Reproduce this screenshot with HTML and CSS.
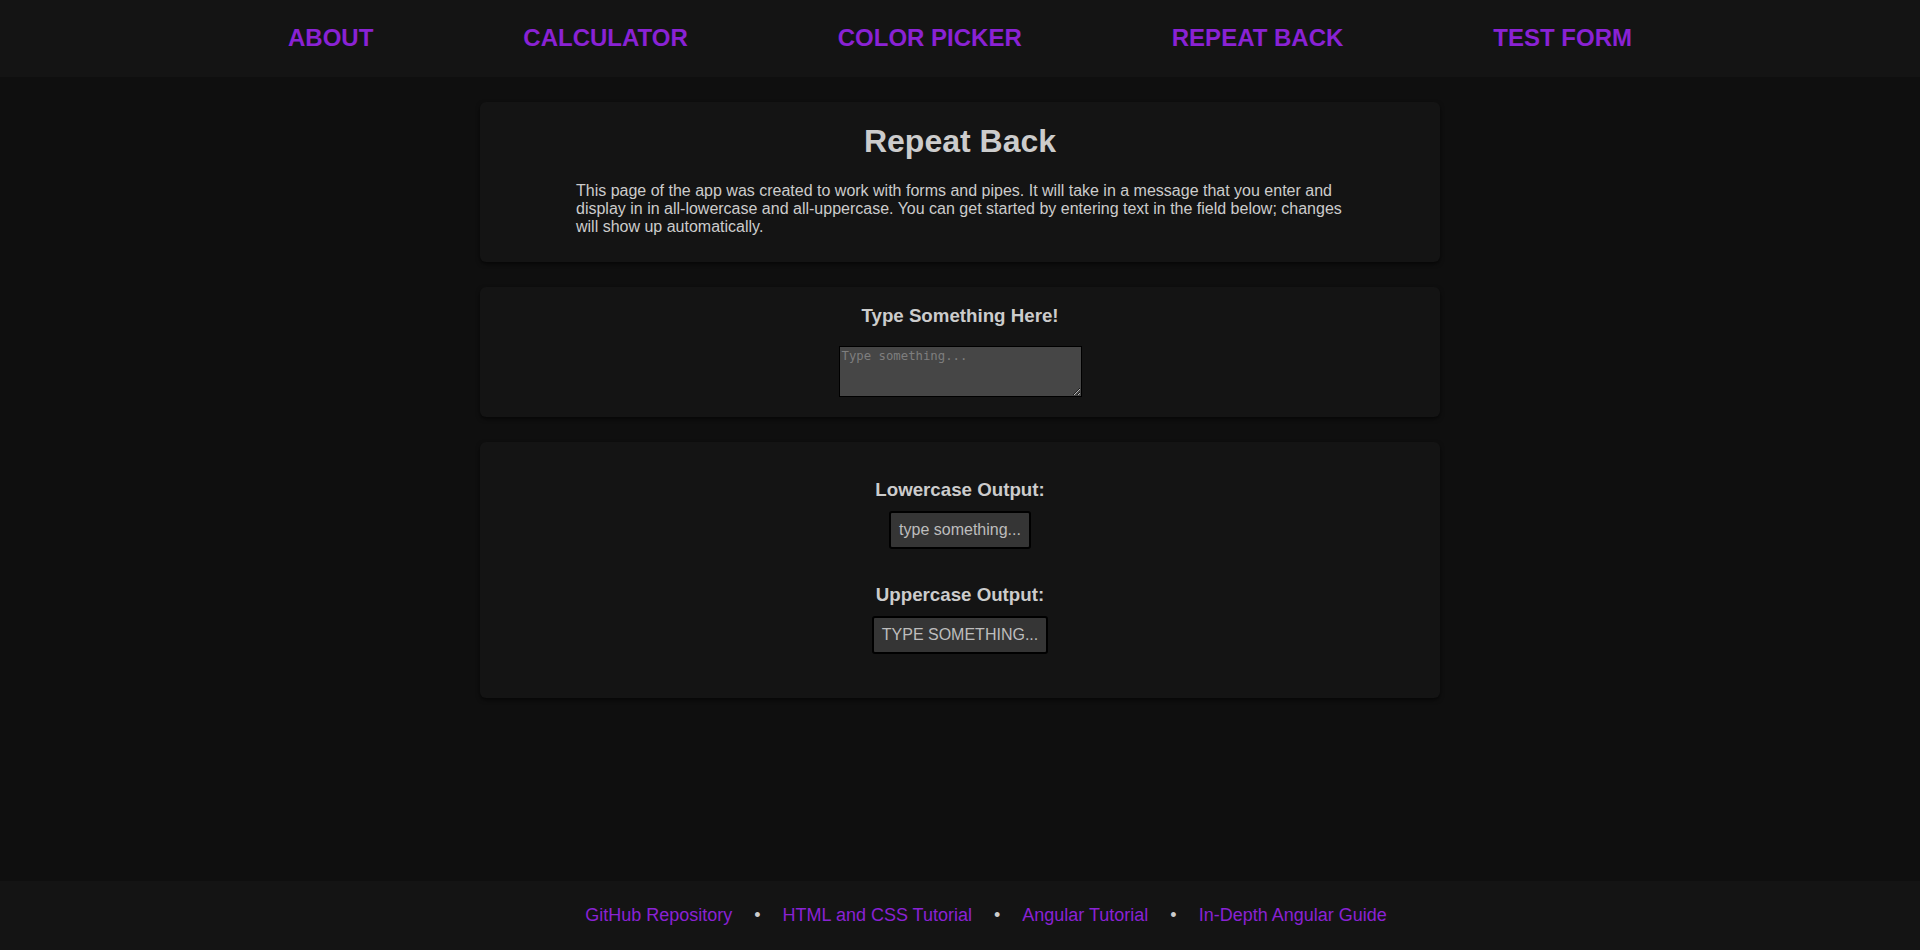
FILE: index.html
```html
<!DOCTYPE html>
<html lang="en">
<head>
<meta charset="utf-8">
<title>Repeat Back</title>
<link rel="stylesheet" href="styles.css">
</head>
<body>
<header class="topbar">
  <nav class="nav">
    <a class="nav-link" href="#">ABOUT</a>
    <a class="nav-link" href="#">CALCULATOR</a>
    <a class="nav-link" href="#">COLOR PICKER</a>
    <a class="nav-link" href="#">REPEAT BACK</a>
    <a class="nav-link" href="#">TEST FORM</a>
  </nav>
</header>
<main class="content">
  <section class="card intro">
    <h1 class="title">Repeat Back</h1>
    <p class="lead">This page of the app was created to work with forms and pipes. It will take in a message that you enter and display in in all-lowercase and all-uppercase. You can get started by entering text in the field below; changes will show up automatically.</p>
  </section>
  <section class="card entry">
    <h3 class="label">Type Something Here!</h3>
    <textarea class="input" placeholder="Type something..."></textarea>
  </section>
  <section class="card outputs">
    <div class="out-group">
      <h3 class="label">Lowercase Output:</h3>
      <div class="out-box">type something...</div>
    </div>
    <div class="out-group">
      <h3 class="label">Uppercase Output:</h3>
      <div class="out-box">TYPE SOMETHING...</div>
    </div>
  </section>
</main>
<footer class="footer">
  <a class="foot-link" href="#">GitHub Repository</a>
  <span class="dot">•</span>
  <a class="foot-link" href="#">HTML and CSS Tutorial</a>
  <span class="dot">•</span>
  <a class="foot-link" href="#">Angular Tutorial</a>
  <span class="dot">•</span>
  <a class="foot-link" href="#">In-Depth Angular Guide</a>
</footer>
</body>
</html>
```
FILE: styles.css
```css
html, body {
  margin: 0;
  padding: 0;
}
body {
  background: #0f0f0f;
  color: #cccccc;
  font-family: "Liberation Sans", Arial, sans-serif;
  min-height: 100vh;
  display: flex;
  flex-direction: column;
}
.topbar {
  height: 77px;
  box-sizing: border-box;
  padding-bottom: 2px;
  background: #141414;
  display: flex;
  align-items: center;
  justify-content: center;
}
.nav {
  display: flex;
  gap: 150px;
}
.nav-link {
  color: #8a22d4;
  font-size: 24px;
  font-weight: bold;
  text-decoration: none;
}
.content {
  flex: 1;
  display: flex;
  flex-direction: column;
  align-items: center;
  gap: 25px;
  padding-top: 25px;
}
.card {
  width: 960px;
  box-sizing: border-box;
  background: #141414;
  border-radius: 6px;
  box-shadow: 0 2px 4px rgba(0, 0, 0, 0.6);
  text-align: center;
}
.intro {
  padding: 21px 0 27px;
}
.title {
  margin: 0;
  font-size: 32px;
  font-weight: bold;
  color: #cccccc;
}
.lead {
  width: 80%;
  margin: 22px auto 0;
  text-align: left;
  font-size: 16px;
  line-height: 17.75px;
}
.entry {
  padding: 18px 20px 20px;
}
.label {
  margin: 0;
  font-size: 18.72px;
  font-weight: bold;
  color: #cccccc;
}
.input {
  display: block;
  margin: 19px auto 0;
  width: 243px;
  height: 51px;
  box-sizing: border-box;
  background: #464646;
  border: 1px solid #000;
  padding: 2px;
  color: #ccc;
  font-family: "DejaVu Sans Mono", monospace;
  font-size: 12.3px;
  resize: vertical;
}
.input::placeholder {
  color: #7e7e7e;
}
.outputs {
  padding: 37px 20px 44px;
  display: flex;
  flex-direction: column;
  align-items: center;
  gap: 35px;
}
.out-group {
  display: flex;
  flex-direction: column;
  align-items: center;
  gap: 10px;
}
.out-box {
  background: #353535;
  border: 2px solid #000;
  border-radius: 3px;
  padding: 8px 8px;
  line-height: 18px;
  font-size: 16px;
  color: #bdbdbd;
}
.footer {
  height: 69px;
  box-sizing: border-box;
  padding-left: 52px;
  background: #141414;
  display: flex;
  align-items: center;
  justify-content: center;
  font-size: 18px;
}
.foot-link {
  color: #8a22d4;
  text-decoration: none;
}
.dot {
  margin: 0 22px;
  color: #cccccc;
}
```
